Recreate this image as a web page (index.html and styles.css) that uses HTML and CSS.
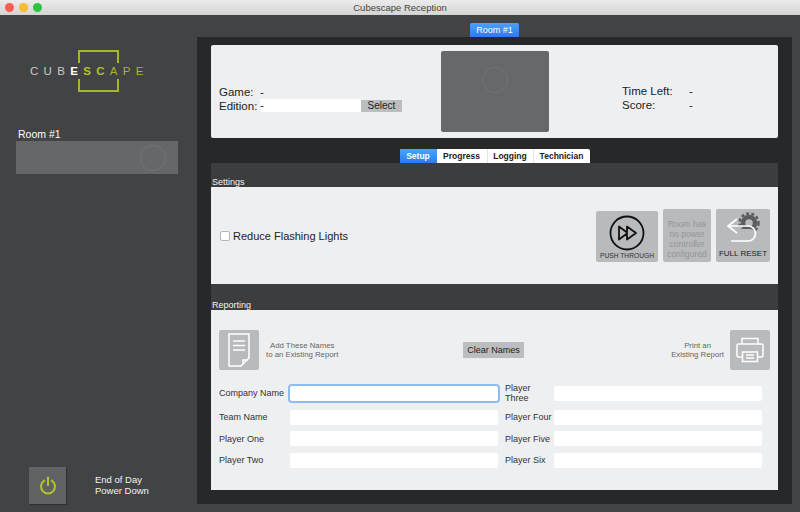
FILE: index.html
```html
<!DOCTYPE html>
<html lang="en">
<head>
    <meta charset="UTF-8">
    <title>Cubescape Reception</title>
    <link rel="stylesheet" href="styles.css">
</head>
<body>

<div class="window">
    <!-- Title bar -->
    <div class="titlebar">
        <div class="lights">
            <span class="light red"></span>
            <span class="light yellow"></span>
            <span class="light green"></span>
        </div>
        <div class="title">Cubescape Reception</div>
    </div>

    <div class="content">
        <!-- Sidebar -->
        <div class="sidebar">
            <div class="logo">
                <svg class="logo-frame" width="44" height="44" viewBox="0 0 44 44">
                    <path d="M2 14V2H41V14M2 30V42H41V30" fill="none" stroke="#a8b52c" stroke-width="2"/>
                </svg>
                <div class="logo-text"><span class="w">CUB</span><span class="b">E</span><span class="g">SC</span><span class="o">APE</span></div>
            </div>
            <div class="room-label">Room #1</div>
            <div class="room-thumb"><span class="spinner"></span></div>
            <div class="power-row">
                <div class="power-btn">
                    <svg width="20" height="20" viewBox="0 0 20 20">
                        <path d="M6.2 4.6a7 7 0 1 0 7.6 0M10 1.5V9" fill="none" stroke="#b3c22c" stroke-width="2" stroke-linecap="round"/>
                    </svg>
                </div>
                <div class="power-text">End of Day<br>Power Down</div>
            </div>
        </div>

        <!-- Main -->
        <div class="main">
            <div class="room-tab-row"><div class="room-tab">Room #1</div></div>
            <div class="main-panel">
                <div class="game-card">
                    <div class="game-info">
                        <div class="game-row"><span class="game-key">Game:</span><span>-</span></div>
                        <div class="game-row">
                            <span class="game-key">Edition:</span>
                            <span class="edition-input">-</span>
                            <span class="select-btn">Select</span>
                        </div>
                    </div>
                    <div class="game-thumb"><span class="spinner big"></span></div>
                    <div class="time-info">
                        <div class="time-row"><span class="time-key">Time Left:</span><span>-</span></div>
                        <div class="time-row"><span class="time-key">Score:</span><span>-</span></div>
                    </div>
                </div>

                <div class="tabs">
                    <div class="tab active">Setup</div>
                    <div class="tab t-progress">Progress</div>
                    <div class="tab t-logging">Logging</div>
                    <div class="tab t-tech">Technician</div>
                </div>

                <div class="tab-panel">
                    <div class="section-title settings-title">Settings</div>
                    <div class="settings">
                        <label class="check-row"><span class="checkbox"></span>Reduce Flashing Lights</label>
                        <div class="action-btns">
                            <div class="action push">
                                <svg width="38" height="38" viewBox="0 0 38 38">
                                    <circle cx="19" cy="19" r="16.5" fill="none" stroke="#111" stroke-width="1.8"/>
                                    <path d="M11 12.5V25.500L19 19.500V25.500L28 19L19 12.500V18.500Z" fill="none" stroke="#111" stroke-width="1.8" stroke-linejoin="round"/>
                                </svg>
                                <div class="push-label">PUSH THROUGH</div>
                            </div>
                            <div class="action disabled">Room has no power controller configured</div>
                            <div class="action reset">
                                <svg width="42" height="38" viewBox="0 0 42 38">
                                    <circle cx="27" cy="14" r="6" fill="none" stroke="#5c5d5f" stroke-width="4.500"/>
                                    <circle cx="27" cy="14" r="9.500" fill="none" stroke="#5c5d5f" stroke-width="2.500" stroke-dasharray="3 2.200"/>
                                    <path d="M9 20H28a6.500 6.500 0 0 1 0 13H9" fill="#b9babb" stroke="none"/>
                                    <path d="M15 10L6 17L15 24M6 17H26a7.500 7.500 0 0 1 0 15H9" fill="none" stroke="#fff" stroke-width="1.700"/>
                                </svg>
                                <div class="reset-label">FULL RESET</div>
                            </div>
                        </div>
                    </div>

                    <div class="section-title reporting-title">Reporting</div>
                    <div class="reporting">
                        <div class="report-top">
                            <div class="report-left">
                                <div class="icon-btn">
                                    <svg width="22" height="34" viewBox="0 0 22 34">
                                        <path d="M1 1H21V25L13 33H1Z" fill="none" stroke="#fff" stroke-width="1.500"/>
                                        <path d="M5 8H17M5 12.500H17M5 17H17" stroke="#fff" stroke-width="1.500"/>
                                        <path d="M15 32V27H20" fill="none" stroke="#fff" stroke-width="1.500"/>
                                    </svg>
                                </div>
                                <div class="report-note note-left">Add These Names<br>to an Existing Report</div>
                            </div>
                            <div class="clear-btn">Clear Names</div>
                            <div class="report-right">
                                <div class="report-note">Print an<br>Existing Report</div>
                                <div class="icon-btn">
                                    <svg width="28" height="26" viewBox="0 0 28 26">
                                        <path d="M6 7V1.500H22V7M6 20H2.500A1.500 1.500 0 0 1 1 18.500V8.500A1.500 1.500 0 0 1 2.500 7H25.500A1.500 1.500 0 0 1 27 8.500V18.500A1.500 1.500 0 0 1 25.500 20H22" fill="none" stroke="#fff" stroke-width="1.500"/>
                                        <path d="M6.500 15H21.500V24.500H6.500ZM10 18H18M10 21H18" fill="none" stroke="#fff" stroke-width="1.500"/>
                                    </svg>
                                </div>
                            </div>
                        </div>

                        <div class="names-grid">
                            <span class="name-label">Company Name</span><span class="name-input focused"></span>
                            <span class="name-label">Player Three</span><span class="name-input"></span>
                            <span class="name-label">Team Name</span><span class="name-input"></span>
                            <span class="name-label">Player Four</span><span class="name-input"></span>
                            <span class="name-label">Player One</span><span class="name-input"></span>
                            <span class="name-label">Player Five</span><span class="name-input"></span>
                            <span class="name-label">Player Two</span><span class="name-input"></span>
                            <span class="name-label">Player Six</span><span class="name-input"></span>
                        </div>
                    </div>
                </div>
            </div>
        </div>
    </div>
</div>

</body>
</html>
```

FILE: styles.css
```css
* {
    box-sizing: border-box;
}

body {
    margin: 0;
    font-family: "Liberation Sans", Arial, sans-serif;
    color: #222;
    background: #424345;
    overflow: hidden;
}

.window {
    width: 800px;
    height: 512px;
    display: flex;
    flex-direction: column;
}

.titlebar {
    height: 15px;
    background: linear-gradient(to bottom, #ebebeb, #d4d4d4);
    display: flex;
    align-items: center;
    justify-content: center;
    position: relative;
    font-size: 9.500px;
    color: #444;
}

.lights {
    position: absolute;
    left: 5px;
    top: 3px;
    display: flex;
    gap: 5px;
}

.light {
    width: 9px;
    height: 9px;
    border-radius: 50%;
}

.red { background: #fb5a55; }
.yellow { background: #fbbb2e; }
.green { background: #2ac63e; }

.content {
    flex: 1;
    display: flex;
}

/* Sidebar */
.sidebar {
    width: 197px;
    display: flex;
    flex-direction: column;
    padding: 35px 0 8px 16px;
}

.logo {
    position: relative;
    height: 42px;
    width: 136px;
    margin-left: 14px;
    display: flex;
    align-items: center;
}

.logo-frame {
    position: absolute;
    left: 47px;
    top: -1px;
}

.logo-text {
    font-size: 11.500px;
    letter-spacing: 5.300px;
    white-space: nowrap;
    color: #c9cacb;
}

.logo-text .b { color: #fff; font-weight: bold; }
.logo-text .g { color: #b3c22c; font-weight: bold; }
.logo-text .o { color: #a8b52c; }

.room-label {
    margin: 36px 0 0 2px;
    font-size: 10.500px;
    color: #fff;
    line-height: 12px;
}

.room-thumb {
    width: 162px;
    height: 33px;
    margin-top: 1px;
    background: #666769;
    display: flex;
    align-items: center;
    justify-content: flex-end;
    padding-right: 12px;
}

.spinner {
    width: 26px;
    height: 26px;
    border: 1px solid #727375;
    border-radius: 50%;
}

.spinner.big {
    margin-top: -24px;
}

.power-row {
    margin-top: auto;
    margin-left: 13px;
    display: flex;
    align-items: center;
    gap: 29px;
}

.power-btn {
    width: 37px;
    height: 37px;
    background: #616264;
    box-shadow: 1px 1px 1px #2e2f30;
    display: flex;
    align-items: center;
    justify-content: center;
}

.power-text {
    font-size: 9.500px;
    line-height: 11px;
    color: #f2f2f2;
    margin-bottom: 2px;
}

/* Main area */
.main {
    width: 595px;
    height: 489px;
    display: flex;
    flex-direction: column;
}

.room-tab-row {
    height: 22px;
    display: flex;
    justify-content: center;
    align-items: flex-end;
    flex-shrink: 0;
}

.room-tab {
    width: 49px;
    height: 14px;
    background: linear-gradient(to bottom, #4fa0fb, #2a7cf0);
    border-radius: 2px 2px 0 0;
    color: #fff;
    font-size: 9px;
    line-height: 14px;
    text-align: center;
}

.main-panel {
    flex: 1;
    background: #27282a;
    padding: 8px 14px 14px;
    display: flex;
    flex-direction: column;
    align-items: center;
}

.game-card {
    width: 100%;
    height: 93px;
    flex-shrink: 0;
    background: #eeeff1;
    border-radius: 2px;
    display: flex;
    align-items: center;
    padding-left: 8px;
    font-size: 11.500px;
    color: #222;
}

.game-info {
    width: 222px;
    margin-top: 14px;
}

.game-row {
    display: flex;
    align-items: center;
    height: 14px;
}

.game-key {
    width: 41px;
}

.edition-input {
    width: 101px;
    height: 13px;
    background: #fff;
    line-height: 13px;
}

.select-btn {
    width: 41px;
    height: 12px;
    background: #bcbdbe;
    font-size: 10px;
    line-height: 12px;
    text-align: center;
}

.game-thumb {
    width: 108px;
    height: 81px;
    background: #676869;
    border-radius: 2px;
    display: flex;
    align-items: center;
    justify-content: center;
}

.time-info {
    margin-left: 73px;
    margin-top: 13px;
}

.time-row {
    display: flex;
    height: 13.500px;
    align-items: center;
}

.time-key {
    width: 67px;
}

.tabs {
    display: flex;
    height: 14px;
    margin-top: 11px;
    flex-shrink: 0;
    background: #fff;
    border-radius: 2px 2px 0 0;
    font-size: 8.500px;
    font-weight: bold;
    line-height: 14px;
    text-align: center;
}

.tab {
    width: 48px;
    border-right: 1px solid #e6e6e6;
}

.tab.active {
    width: 37px;
    background: linear-gradient(to bottom, #4fa0fb, #2a7cf0);
    color: #fff;
    border-radius: 2px 0 0 0;
    border: 0;
}

.t-progress { width: 51px; }
.t-logging { width: 46px; }
.t-tech { width: 56px; border: 0; }

.tab-panel {
    width: 100%;
    flex: 1;
    background: #3c3d3f;
    display: flex;
    flex-direction: column;
}

.section-title {
    color: #f2f2f2;
    font-size: 9px;
    line-height: 10px;
    padding-left: 1px;
}

.settings-title { padding-top: 14px; }
.reporting-title { padding-top: 16px; }

.settings {
    height: 97px;
    background: #eeeff1;
    display: flex;
    align-items: center;
    justify-content: space-between;
    padding: 0 8px 0 9px;
}

.check-row {
    display: flex;
    align-items: center;
    gap: 3px;
    font-size: 11px;
    color: #222;
}

.checkbox {
    width: 10px;
    height: 10px;
    background: #fff;
    border: 1px solid #b5b5b5;
    border-radius: 2px;
}

.action-btns {
    display: flex;
    align-items: flex-start;
    gap: 5px;
}

.action {
    background: #b9babb;
    border-radius: 2px;
    display: flex;
    flex-direction: column;
    align-items: center;
    height: 53px;
}

.push {
    width: 62px;
    height: 51px;
    margin-top: 2px;
    padding-top: 3px;
}

.push-label {
    font-size: 6.700px;
    line-height: 8px;
    margin-top: 0;
    color: #333;
}

.disabled {
    width: 48px;
    font-size: 8.500px;
    line-height: 10px;
    color: #949596;
    text-align: center;
    padding-top: 7px;
    justify-content: center;
}

.reset {
    width: 54px;
}

.reset-label {
    font-size: 8px;
    line-height: 9px;
    margin-top: 2px;
    color: #222;
}

.reporting {
    flex: 1;
    background: #eeeff1;
    padding: 20px 8px 0;
    display: flex;
    flex-direction: column;
}

.report-top {
    display: flex;
    align-items: center;
    justify-content: space-between;
    height: 40px;
}

.report-left, .report-right {
    display: flex;
    align-items: center;
    width: 200px;
}

.report-right {
    justify-content: flex-end;
    gap: 6px;
    text-align: center;
}

.icon-btn {
    width: 40px;
    height: 40px;
    background: #b9babb;
    border-radius: 2px;
    display: flex;
    align-items: center;
    justify-content: center;
}

.report-note {
    font-size: 7.800px;
    line-height: 9px;
    color: #666;
    text-align: center;
}

.note-left {
    margin-left: 7px;
}

.clear-btn {
    width: 61px;
    height: 16px;
    background: #bcbdbe;
    font-size: 9px;
    line-height: 16px;
    text-align: center;
    margin-right: 2px;
}

.names-grid {
    margin-top: 13px;
    display: grid;
    grid-template-columns: 71px 208px 56px 208px;
    column-gap: 0;
    row-gap: 6.500px;
    font-size: 9px;
    color: #333;
    align-items: center;
}

.names-grid .name-label:nth-child(4n+3) {
    padding-left: 7px;
}

.name-input {
    height: 15px;
    background: #fff;
    border-radius: 2px;
}

.name-input.focused {
    box-shadow: 0 0 0 2px #8fbcf0;
}
```
